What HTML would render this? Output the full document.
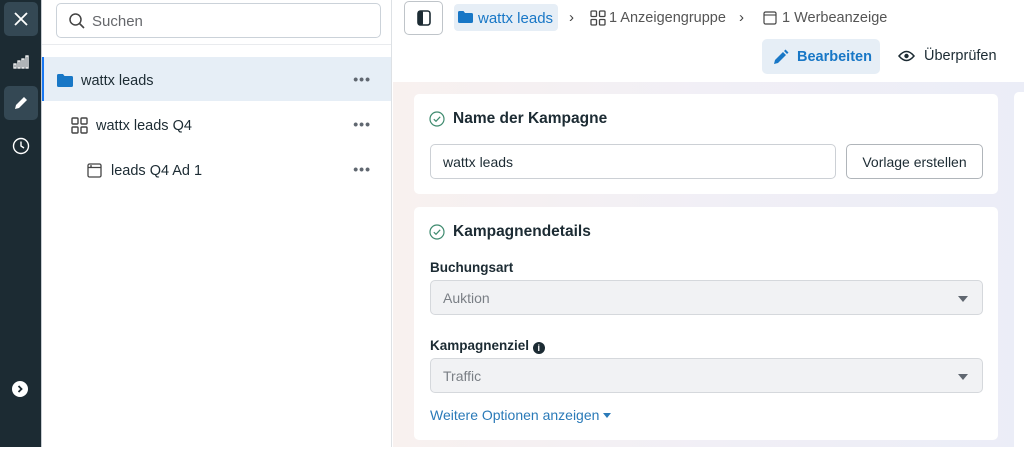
<!DOCTYPE html>
<html><head><meta charset="utf-8"><style>
*{box-sizing:border-box;margin:0;padding:0}
body{width:1024px;height:447px;overflow:hidden;font-family:"Liberation Sans",sans-serif;color:#1c2b33;background:#fff;position:relative}
.abs{position:absolute}
.rail{left:0;top:0;width:41px;height:447px;background:#1c2b33}
.rb{left:4px;width:34px;height:34px;border-radius:5px;display:flex;align-items:center;justify-content:center}
.panel{left:41px;top:0;width:351px;height:447px;background:#fff;border-right:1px solid #dde1e5;border-left:1px solid #c8cdd2}
.search{left:14px;top:3px;width:325px;height:35px;border:1px solid #cbd2d9;border-radius:5px;font-size:15px;color:#65676b;padding:9px 0 0 35px}
.row{left:0;width:349px;height:44px;font-size:14.5px;display:flex;align-items:center;padding-top:3px}
.dots{position:absolute;right:20px;top:14px;color:#606770;font-size:14px;letter-spacing:1px;font-weight:bold}
.main{left:393px;top:0;width:631px;height:447px;background:linear-gradient(90deg,#f8f1ef,#f1eff6 50%,#ebedf7)}
.hdr{left:393px;top:0;width:631px;height:82px;background:#fff}
.card{background:#fff;border-radius:5px;position:absolute}
.inp{position:absolute;border:1px solid #ccd0d5;border-radius:5px;font-size:14px;padding-left:12px;display:flex;align-items:center}
.sel{background:#f1f2f4;color:#7a7f85;border-color:#d5d8dc}
.tri{position:absolute;right:14px;top:15px;width:0;height:0;border-left:5px solid transparent;border-right:5px solid transparent;border-top:6px solid #606770}
h3{font-size:15.5px;font-weight:bold;position:absolute}
.lbl{position:absolute;font-size:13.5px;font-weight:bold}
</style></head><body>
<div class="abs rail">
 <div class="abs rb" style="top:2px;background:#344854"><svg width="14" height="14"><path d="M1 1L13 13M13 1L1 13" stroke="#fff" stroke-width="1.8"/></svg></div>
 <div class="abs rb" style="top:45px"><svg width="16" height="14"><g fill="none" stroke="#fff" stroke-width="1.3"><rect x="1" y="9" width="2" height="4"/><rect x="5" y="6" width="2" height="7"/><rect x="9" y="4" width="2" height="9"/><rect x="13" y="1" width="2" height="12"/></g></svg></div>
 <div class="abs rb" style="top:86px;background:#344854"><svg width="16" height="16"><path d="M2 14L3 10L11 2L14 5L6 13Z" fill="#fff"/></svg></div>
 <div class="abs rb" style="top:129px"><svg width="18" height="18"><circle cx="9" cy="9" r="7.5" fill="none" stroke="#fff" stroke-width="1.4"/><path d="M9 4.5V9L12 11" fill="none" stroke="#fff" stroke-width="1.4"/></svg></div>
 <div class="abs" style="left:12px;top:381px;width:16px;height:16px;border-radius:50%;background:#fff;display:flex;align-items:center;justify-content:center"><svg width="8" height="8"><path d="M2.5 1L5.5 4L2.5 7" fill="none" stroke="#1c2b33" stroke-width="1.8"/></svg></div>
</div>
<div class="abs panel">
 <div class="abs search"><svg class="abs" style="left:11px;top:8px" width="18" height="18"><circle cx="7.5" cy="7.5" r="5.5" fill="none" stroke="#444" stroke-width="1.5"/><path d="M11.5 11.5L16 16" stroke="#444" stroke-width="1.6"/></svg>Suchen</div>
 <div class="abs" style="left:0;top:44px;width:349px;height:1px;background:#e9ebee"></div>
 <div class="abs row" style="top:57px;background:#e6eef6;border-left:2px solid #1877f2;padding-left:13px"><svg width="16" height="13" style="margin-right:8px"><path d="M0 1.5Q0 0 1.5 0H6L7.5 2H14.5Q16 2 16 3.5V11.5Q16 13 14.5 13H1.5Q0 13 0 11.5Z" fill="#1877c6"/></svg>wattx leads<span class="dots">•••</span></div>
 <div class="abs row" style="top:102px;padding-left:29px"><svg width="17" height="17" style="margin-right:8px"><g fill="none" stroke="#444" stroke-width="1.4"><rect x="1" y="1" width="6" height="6" rx="1"/><rect x="10" y="1" width="6" height="6" rx="1"/><rect x="1" y="10" width="6" height="6" rx="1"/><rect x="10" y="10" width="6" height="6" rx="1"/></g></svg>wattx leads Q4<span class="dots">•••</span></div>
 <div class="abs row" style="top:147px;padding-left:45px"><svg width="15" height="15" style="margin-right:9px"><rect x="1" y="1" width="13" height="13" rx="1.5" fill="none" stroke="#444" stroke-width="1.3"/><path d="M1 4.5H14M3 3H5" stroke="#444" stroke-width="1.2"/></svg>leads Q4 Ad 1<span class="dots">•••</span></div>
</div>
<div class="abs main"></div>
<div class="abs hdr">
 <div class="abs" style="left:11px;top:1px;width:39px;height:34px;border:1px solid #bfc4c9;border-radius:5px;display:flex;align-items:center;justify-content:center"><svg width="14" height="16"><rect x="1" y="1" width="12" height="14" rx="2.5" fill="none" stroke="#1c2b33" stroke-width="1.6"/><rect x="1" y="1" width="5" height="14" rx="1.5" fill="#1c2b33"/></svg></div>
 <div class="abs" style="left:61px;top:4px;width:104px;height:27px;background:#e6eef6;border-radius:4px;font-size:15px;color:#1877c6;padding:6px 0 0 4px;display:flex"><svg width="15" height="12" style="margin:1px 5px 0 0"><path d="M0 1.5Q0 0 1.5 0H5.5L7 2H13.5Q15 2 15 3.5V10.5Q15 12 13.5 12H1.5Q0 12 0 10.5Z" fill="#1877c6"/></svg>wattx leads</div>
 <div class="abs" style="left:176px;top:9px;font-size:15px;color:#444">›</div>
 <div class="abs" style="left:197px;top:10px;font-size:14.5px;color:#555;display:flex"><svg width="16" height="16" style="margin-right:3px"><g fill="none" stroke="#444" stroke-width="1.3"><rect x="1" y="1" width="5.5" height="5.5" rx="1"/><rect x="9.5" y="1" width="5.5" height="5.5" rx="1"/><rect x="1" y="9.5" width="5.5" height="5.5" rx="1"/><rect x="9.5" y="9.5" width="5.5" height="5.5" rx="1"/></g></svg>1 Anzeigengruppe</div>
 <div class="abs" style="left:346px;top:9px;font-size:15px;color:#444">›</div>
 <div class="abs" style="left:370px;top:10px;font-size:14.5px;color:#555;display:flex"><svg width="14" height="14" style="margin:1px 5px 0 0"><rect x="1" y="1" width="12" height="12" rx="1.5" fill="none" stroke="#444" stroke-width="1.2"/><path d="M1 4H13" stroke="#444" stroke-width="1.1"/></svg>1 Werbeanzeige</div>
 <div class="abs" style="left:369px;top:39px;width:118px;height:35px;background:#e6eef6;border-radius:5px;font-size:14.5px;font-weight:bold;color:#1877c6;display:flex;align-items:center;padding-left:11px"><svg width="16" height="16" style="margin-right:8px"><path d="M1 15L2 11L10 3L13 6L5 14Z M11 2L12.5 0.5L15.5 3.5L14 5Z" fill="#1877c6"/></svg>Bearbeiten</div>
 <div class="abs" style="left:505px;top:48px;font-size:14.5px;display:flex"><svg width="17" height="14" style="margin:1px 9px 0 0"><path d="M1 7Q8.5 -2 16 7Q8.5 16 1 7Z" fill="none" stroke="#1c2b33" stroke-width="1.5"/><circle cx="8.5" cy="7" r="2.2" fill="#1c2b33"/></svg>Überprüfen</div>
</div>
<div class="card" style="left:1014px;top:92px;width:20px;height:360px"></div>
<div class="card" style="left:414px;top:94px;width:584px;height:100px">
 <svg class="abs" style="left:15px;top:17px" width="16" height="16"><circle cx="8" cy="8" r="7" fill="none" stroke="#3e8a6e" stroke-width="1.2"/><path d="M4.8 8.2L7 10.3L11.2 5.8" fill="none" stroke="#3e8a6e" stroke-width="1.2"/></svg>
 <h3 style="left:39px;top:16px">Name der Kampagne</h3>
 <div class="inp" style="left:16px;top:50px;width:406px;height:35px">wattx leads</div>
 <div class="inp" style="left:432px;top:50px;width:137px;height:35px;border-color:#b0b5ba;justify-content:center;padding:0">Vorlage erstellen</div>
</div>
<div class="card" style="left:414px;top:207px;width:584px;height:233px">
 <svg class="abs" style="left:15px;top:17px" width="16" height="16"><circle cx="8" cy="8" r="7" fill="none" stroke="#3e8a6e" stroke-width="1.2"/><path d="M4.8 8.2L7 10.3L11.2 5.8" fill="none" stroke="#3e8a6e" stroke-width="1.2"/></svg>
 <h3 style="left:39px;top:16px">Kampagnendetails</h3>
 <div class="lbl" style="left:16px;top:53px">Buchungsart</div>
 <div class="inp sel" style="left:16px;top:73px;width:553px;height:35px">Auktion<span class="tri"></span></div>
 <div class="lbl" style="left:16px;top:131px">Kampagnenziel <span style="display:inline-block;width:12px;height:12px;border-radius:50%;background:#1c2b33;color:#fff;font-size:9px;text-align:center;line-height:12px;vertical-align:-1px">i</span></div>
 <div class="inp sel" style="left:16px;top:151px;width:553px;height:35px">Traffic<span class="tri"></span></div>
 <div class="abs" style="left:16px;top:200px;font-size:14px;color:#2a7ab8">Weitere Optionen anzeigen <span style="display:inline-block;border-left:4px solid transparent;border-right:4px solid transparent;border-top:5px solid #2a7ab8;vertical-align:2px"></span></div>
</div>
</body></html>
